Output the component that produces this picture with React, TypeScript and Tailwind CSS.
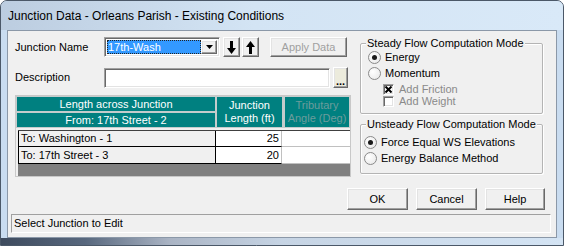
import React from 'react';

const raised =
	'border border-t-white border-l-white border-r-[#696969] border-b-[#696969] shadow-[inset_-1px_-1px_0_#a0a0a0,inset_1px_1px_0_#e3e3e3] bg-[#f0f0f0]';
const sunken =
	'border border-t-[#a0a0a0] border-l-[#a0a0a0] border-r-white border-b-white shadow-[inset_1px_1px_0_#696969,inset_-1px_-1px_0_#e3e3e3]';

function ArrowDown() {
	return (
		<svg width="9" height="13" viewBox="0 0 9 13">
			<rect x="3" y="0" width="3" height="8" fill="#000" />
			<polygon points="0,7 9,7 4.5,13" fill="#000" />
		</svg>
	);
}

function ArrowUp() {
	return (
		<svg width="9" height="13" viewBox="0 0 9 13">
			<polygon points="0,6 9,6 4.5,0" fill="#000" />
			<rect x="3" y="5" width="3" height="8" fill="#000" />
		</svg>
	);
}

function Radio({ checked }: { checked?: boolean }) {
	return (
		<span className="flex h-[13px] w-[13px] items-center justify-center rounded-full border border-[#8a8a8a] bg-[radial-gradient(circle_at_35%_35%,#ffffff,#e6e6e6)]">
			{checked && <span className="h-[5px] w-[5px] rounded-full bg-[#1a1a1a]" />}
		</span>
	);
}

function GroupBox({
	title,
	className,
	children,
}: {
	title: string;
	className: string;
	children: React.ReactNode;
}) {
	return (
		<div className={`relative rounded-[2px] border border-[#b4b4b4] shadow-[inset_1px_1px_0_#fff,1px_1px_0_#fff] ${className}`}>
			<span className="absolute left-[5px] top-[-8px] bg-[#f0f0f0] px-[1px] leading-[14px]">{title}</span>
			{children}
		</div>
	);
}

export default function App() {
	return (
		<div className="flex h-[246px] w-[564px] flex-col overflow-hidden rounded-t-[7px] border border-[#4b5868] bg-[#c9dcf0] font-['Liberation_Sans',Arial,sans-serif] text-[11px] text-black">
			<div className="flex h-[29px] shrink-0 items-center bg-[linear-gradient(to_right,#bccde0,#d3e4f4_45%,#d9e9f8)] pl-[7px] text-[12px]">
				Junction Data - Orleans Parish - Existing Conditions
			</div>

			<div className="mx-[6px] flex flex-1 flex-col border border-[#8b98a8] bg-[#f0f0f0]">
				<div className="flex pl-[7px] pt-[6px]">
					{/* left side */}
					<div className="flex w-[336px] flex-col">
						<div className="flex h-[20px] items-center">
							<span className="w-[89px]">Junction Name</span>
							<div className={`flex h-[20px] w-[116px] items-center p-[2px] ${sunken} bg-white`}>
								<div className="flex h-full flex-1 items-center bg-[#3399ff] pl-[1px] text-white outline outline-1 outline-dotted outline-[#222] -outline-offset-1">
									17th-Wash
								</div>
								<div className={`flex h-full w-[16px] items-center justify-center ${raised}`}>
									<svg width="7" height="4" viewBox="0 0 7 4">
										<polygon points="0,0 7,0 3.5,4" fill="#000" />
									</svg>
								</div>
							</div>
							<div className={`ml-[3px] flex h-[20px] w-[17px] items-center justify-center ${raised}`}>
								<ArrowDown />
							</div>
							<div className={`ml-[2px] flex h-[20px] w-[17px] items-center justify-center ${raised}`}>
								<ArrowUp />
							</div>
							<div className={`ml-[11px] flex h-[20px] w-[77px] items-center justify-center text-[#a0a0a0] ${raised}`}>
								Apply Data
							</div>
						</div>

						<div className="mt-[10px] flex h-[21px] items-center">
							<span className="w-[89px]">Description</span>
							<div className={`h-[20px] w-[226px] bg-white ${sunken}`} />
							<div className={`ml-[3px] flex h-[21px] w-[15px] items-end justify-center pb-[1px] font-bold leading-[10px] !bg-[#ecebdc] ${raised}`}>
								...
							</div>
						</div>

						{/* grid */}
						<div className="mt-[7px] flex h-[82px] flex-col border border-[#c8c8c8] bg-[#f0f0f0]">
							<div className="flex h-[32px] text-white">
								<div className="flex w-[200px] flex-col">
									<div className="flex h-[16px] items-center justify-center border border-[#c4cccc] bg-[#008080]">
										Length across Junction
									</div>
									<div className="flex h-[16px] items-center justify-center border border-[#c4cccc] bg-[#008080]">
										From: 17th Street - 2
									</div>
								</div>
								<div className="flex w-[67px] flex-col items-center justify-center border border-[#c4cccc] bg-[#008080] leading-[13px]">
									<span>Junction</span>
									<span>Length (ft)</span>
								</div>
								<div className="flex flex-1 flex-col items-center justify-center overflow-hidden whitespace-nowrap border border-l-2 border-[#c4cccc] bg-[#008080] leading-[13px] text-[#6c9c9c]">
									<span>Tributary</span>
									<span>Angle (Deg)</span>
								</div>
							</div>
							<div className="ml-[2px] mt-[2px] flex flex-1 flex-col">
								{[
									['To: Washington - 1', '25'],
									['To: 17th Street - 3', '20'],
								].map(([name, len], i) => (
									<div key={name} className={`flex h-[17px] ${i === 0 ? 'border-t border-t-[#404040]' : ''}`}>
										<div className="flex w-[198px] items-center border-b border-l border-r border-black bg-[#f0f0f0] pl-[2px]">
											{name}
										</div>
										<div className="flex w-[66px] items-center justify-end border-b border-r border-b-black border-r-[#c0c0c0] bg-white pr-[2px]">
											{len}
										</div>
										<div className="flex-1 border-b border-[#c0c0c0] bg-white" />
									</div>
								))}
								<div className="flex-1 bg-[#808080]" />
							</div>
						</div>
					</div>

					{/* right side */}
					<div className="ml-[9px] mt-[6px] flex w-[183px] flex-col">
						<GroupBox title="Steady Flow Computation Mode" className="h-[71px]">
							<div className="flex flex-col pt-[5px]">
								<div className="flex h-[16px] items-center pl-[7px]">
									<Radio checked />
									<span className="ml-[4px]">Energy</span>
								</div>
								<div className="flex h-[16px] items-center pl-[7px]">
									<Radio />
									<span className="ml-[4px]">Momentum</span>
								</div>
								<div className="mt-[2px] flex h-[12px] items-center pl-[22px] text-[#8a8a8a]">
									<span className={`flex h-[11px] w-[11px] items-center justify-center bg-white ${sunken}`}>
										<svg width="7" height="7" viewBox="0 0 7 7">
											<path d="M0.5 0.5 L6.5 6.5 M6.5 0.5 L0.5 6.5" stroke="#000" strokeWidth="2" />
										</svg>
									</span>
									<span className="ml-[5px]">Add Friction</span>
								</div>
								<div className="flex h-[12px] items-center pl-[22px] text-[#8a8a8a]">
									<span className={`h-[11px] w-[11px] bg-white ${sunken}`} />
									<span className="ml-[5px]">Add Weight</span>
								</div>
							</div>
						</GroupBox>
						<GroupBox title="Unsteady Flow Computation Mode" className="mt-[10px] h-[50px]">
							<div className="flex flex-col pt-[9px]">
								<div className="flex h-[16px] items-center pl-[3px]">
									<Radio checked />
									<span className="ml-[4px]">Force Equal WS Elevations</span>
								</div>
								<div className="flex h-[16px] items-center pl-[3px]">
									<Radio />
									<span className="ml-[4px]">Energy Balance Method</span>
								</div>
							</div>
						</GroupBox>
					</div>
				</div>

				<div className="mt-[11px] flex justify-end gap-[8px] pr-[11px]">
					<div className={`flex h-[22px] w-[61px] items-center justify-center ${raised}`}>OK</div>
					<div className={`flex h-[22px] w-[61px] items-center justify-center ${raised}`}>Cancel</div>
					<div className={`flex h-[22px] w-[60px] items-center justify-center ${raised}`}>Help</div>
				</div>

				<div className="mx-[3px] mr-[5px] mt-[4px] flex h-[19px] items-center border border-b-white border-l-[#a0a0a0] border-r-white border-t-[#a0a0a0] pl-[2px]">
					Select Junction to Edit
				</div>
			</div>

			<div className="h-[7px] shrink-0 bg-[linear-gradient(to_right,#3e4b5e,#58687e_15%,#aab4c4_30%,#c6d4e4_50%,#d4e4f4)]" />
		</div>
	);
}
